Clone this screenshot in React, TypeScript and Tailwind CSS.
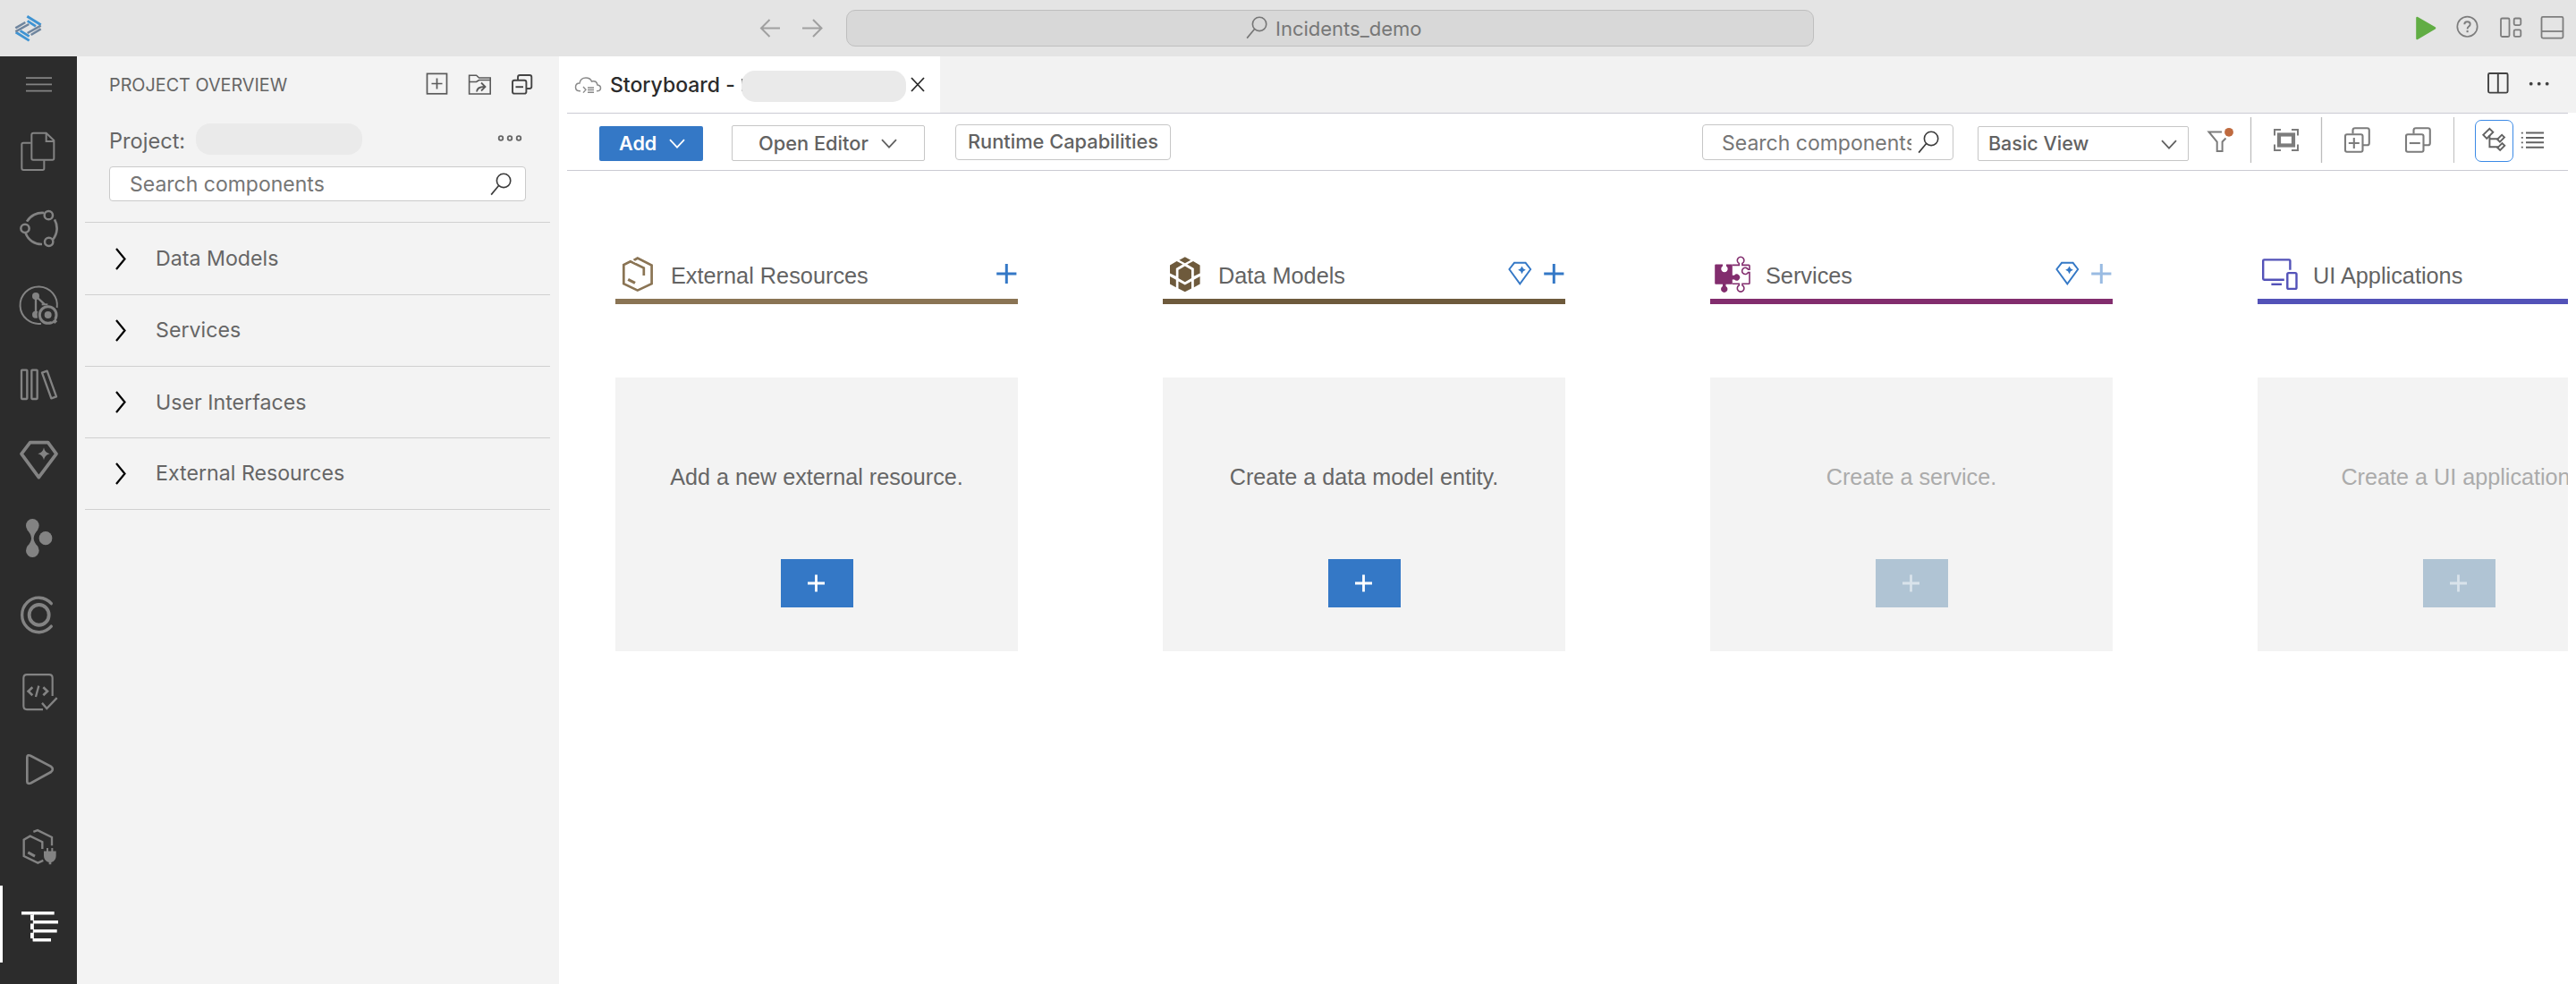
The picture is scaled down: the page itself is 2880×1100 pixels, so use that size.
import React from "react";

type IconProps = {
  box: string;
  className: string;
  stretch?: boolean;
  children: React.ReactNode;
};

function Icon({ box, className, stretch, children }: IconProps) {
  return (
    <svg
      viewBox={box}
      className={`block shrink-0 ${className}`}
      fill="none"
      stroke="currentColor"
      preserveAspectRatio={stretch ? "none" : "xMidYMid meet"}
    >
      {children}
    </svg>
  );
}

function SearchGlyph({ className }: { className: string }) {
  return (
    <Icon box="0 0 25 27" className={className}>
      <circle cx="15.7" cy="9.3" r="8" strokeWidth="1.7" />
      <path d="M10 15 L1.2 25.6" strokeWidth="1.7" />
    </Icon>
  );
}

function Chevron({ className }: { className: string }) {
  return (
    <Icon box="0 0 18 11" className={className}>
      <path d="M1 1.2 L9 9.6 L17 1.2" strokeWidth="1.8" />
    </Icon>
  );
}

function TopBar() {
  return (
    <header className="flex h-[63px] w-full shrink-0 bg-[#e4e4e4]">
      <Icon box="0 0 180 189" className="h-[63px] w-[60px]">
        <g stroke="#3f93d2" strokeWidth="8.5">
          <path d="M91 55 L137 83" />
          <path d="M92 70 L120 88" />
          <path d="M53 108 L98 136" />
          <path d="M68 103 L98 122" />
        </g>
        <g stroke="#6f859e" strokeWidth="7.5">
          <path d="M85 75 L52 94" />
          <path d="M97 81 L52 106" />
          <path d="M137 86 L92 111" />
          <path d="M137 97 L104 117" />
        </g>
      </Icon>
      <Icon box="840 0 90 63" className="ml-[780px] h-[63px] w-[90px] text-[#a0a0a0]">
        <path d="M860.5 22 L851 31.5 L860.5 41 M851 31.5 H872" strokeWidth="2" />
        <path d="M909 22 L918.5 31.5 L909 41 M918.5 31.5 H897" strokeWidth="2" />
      </Icon>
      <div className="ml-4 mt-[11px] flex h-[41px] w-[1082px] items-center rounded-[10px] border border-[#bfbfbf] bg-[#d8d8d8] pl-[446px] text-[#777777]">
        <SearchGlyph className="-mt-0.5 h-[26px] w-6" />
        <span className="ml-[9px] text-[22px] leading-none">Incidents_demo</span>
      </div>
      <Icon box="2690 0 190 63" className="ml-auto h-[63px] w-[190px] text-[#7d7d7d]">
        <path
          d="M2702.5 20 L2722 31.3 L2702.5 43 Z"
          fill="#61ad44"
          stroke="#61ad44"
          strokeWidth="2.6"
          strokeLinejoin="round"
        />
        <circle cx="2758.5" cy="29.8" r="11.2" strokeWidth="1.7" />
        <path
          d="M2755.3 27.2 Q2755.3 24.3 2758.5 24.3 Q2761.7 24.3 2761.7 27 Q2761.7 28.8 2759.9 29.8 Q2758.6 30.6 2758.6 32.4"
          strokeWidth="1.9"
        />
        <path d="M2758.6 34 V36.2" strokeWidth="2.1" />
        <rect x="2796" y="20.5" width="9.5" height="20.5" rx="1.5" strokeWidth="1.8" />
        <rect x="2810.7" y="20.5" width="7.6" height="7.6" rx="1.5" strokeWidth="1.8" />
        <rect x="2810.7" y="33.3" width="7.6" height="7.6" rx="1.5" strokeWidth="1.8" />
        <rect x="2841.5" y="18.8" width="24" height="23.8" rx="1.5" strokeWidth="1.8" />
        <path d="M2841.5 35 H2865.5" strokeWidth="1.8" />
      </Icon>
    </header>
  );
}

function ActivityBar() {
  return (
    <nav className="flex w-[86px] shrink-0 flex-col bg-[#2c2c2c] text-[#838383]">
      <Icon box="0 63 86 67" className="h-[67px] w-[86px]">
        <path d="M29 87.2 H58 M29 94.4 H58 M29 101.7 H58" strokeWidth="1.8" />
      </Icon>
      <Icon box="0 210 258 258" className="h-[86px] w-[86px]">
        <path
          d="M104 299 H78 Q73 299 73 304 V384 Q73 390 79 390 H143 Q148 390 148 385 V358"
          strokeWidth="6"
        />
        <path
          d="M112 266 H155 L181 291 V351 Q181 356 176 356 H111 Q106 356 106 351 V272 Q106 266 112 266 Z"
          strokeWidth="6"
        />
        <path d="M155 266 V294 H181" strokeWidth="6" />
      </Icon>
      <Icon box="0 468 258 258" className="h-[86px] w-[86px]">
        <circle cx="84" cy="586" r="14" strokeWidth="7.5" />
        <circle cx="163" cy="542" r="14" strokeWidth="7.5" />
        <circle cx="164" cy="631" r="14" strokeWidth="7.5" />
        <path d="M90 563 A60 60 0 0 1 148 534" strokeWidth="8" />
        <path d="M183 556 A60 60 0 0 1 177 624" strokeWidth="8" />
        <path d="M86 602 A56 56 0 0 0 141 639" strokeWidth="8" />
      </Icon>
      <Icon box="0 726 258 258" className="h-[86px] w-[86px]">
        <path d="M191 852 A62 62 0 1 0 138 905" strokeWidth="6" />
        <circle cx="120" cy="813" r="12" fill="currentColor" stroke="none" />
        <circle cx="120" cy="875" r="12" fill="currentColor" stroke="none" />
        <path d="M120 813 V875 M120 813 L150 841" strokeWidth="7" />
        <circle cx="161" cy="876" r="36" fill="#2c2c2c" stroke="none" />
        <path d="M140 841 H160" strokeWidth="6" />
        <circle cx="161" cy="876" r="28" strokeWidth="9" />
        <circle cx="161" cy="876" r="12" fill="currentColor" stroke="none" />
        <path d="M178 891 L188 902" strokeWidth="12" />
        <path d="M172 898 L182 889" stroke="#2c2c2c" strokeWidth="4" />
      </Icon>
      <Icon box="0 984 258 258" className="h-[86px] w-[86px]">
        <rect x="72" y="1061" width="19" height="97" rx="2" strokeWidth="7" />
        <rect x="106" y="1061" width="19" height="97" rx="2" strokeWidth="7" />
        <path
          d="M141 1070 L158 1064 L189 1150 L172 1156 Z"
          strokeWidth="7"
          strokeLinejoin="round"
        />
      </Icon>
      <Icon box="0 1242 258 258" className="h-[86px] w-[86px]">
        <path d="M101 1304 H161 L189 1342 L130 1421 L72 1342 Z" strokeWidth="11" strokeLinejoin="round" />
        <path
          d="M147 1321 Q150 1338 167 1342 Q150 1346 147 1363 Q144 1346 127 1342 Q144 1338 147 1321 Z"
          fill="currentColor"
          stroke="none"
        />
      </Icon>
      <Icon box="0 0 258 249.7" stretch className="h-[86px] w-[86px]">
        <g fill="currentColor" stroke="none">
          <circle cx="109" cy="80" r="22" />
          <circle cx="109" cy="161" r="22" />
          <circle cx="153" cy="121" r="22" />
          <path d="M90 92 Q105 108 105 121 Q105 134 90 149 H128 Q113 134 113 121 Q113 108 128 92 Z" />
        </g>
      </Icon>
      <Icon box="0 249.7 258 249.7" stretch className="h-[86px] w-[86px]">
        <circle cx="131" cy="370" r="33" strokeWidth="11.5" />
        <path d="M172 333 A56 56 0 1 0 172 407" strokeWidth="10" strokeLinecap="round" />
      </Icon>
      <Icon box="0 499.5 258 249.7" stretch className="h-[86px] w-[86px]">
        <path
          d="M144 677 H90 Q79 677 79 666 V575 Q79 564 90 564 H165 Q176 564 176 575 V633"
          strokeWidth="6.5"
        />
        <path d="M141 656 L157 674 L191 639" strokeWidth="7" />
        <path d="M109 605 L95 618 L109 631 M145 605 L159 618 L145 631" strokeWidth="8" />
        <path d="M130 600 L120 636" strokeWidth="7" />
      </Icon>
      <Icon box="0 749.2 258 249.7" stretch className="h-[86px] w-[86px]">
        <path
          d="M91 833 Q91 822 102 827 L171 862 Q182 871 171 880 L103 916 Q91 920 91 910 Z"
          strokeWidth="8"
        />
      </Icon>
      <Icon box="0 999 258 249.7" stretch className="h-[86px] w-[86px]">
        <path d="M112 1074 L126 1069 L174 1092 V1119" strokeWidth="7" />
        <path d="M145 1167 L127 1175 L80 1153 V1100 L101 1088 L142 1107 V1130" strokeWidth="7" />
        <path d="M94 1141 L117 1153" strokeWidth="9" />
        <path
          d="M147 1137 H188 V1152 Q188 1168 172 1173 V1180 H164 V1173 Q147 1168 147 1152 Z"
          fill="currentColor"
          stroke="none"
        />
        <path d="M159 1127 V1140 M175 1127 V1140" strokeWidth="6" />
      </Icon>
      <div className="h-[86px] w-[86px] text-white">
        <Icon box="0 1248.7 258 249.7" stretch className="h-[86px] w-[86px]">
          <rect x="0" y="1248.7" width="9" height="249.7" fill="currentColor" stroke="none" />
          <path d="M72 1338 H182 M112 1367 H195 M112 1396 H191 M110 1425 H171" strokeWidth="10" />
          <path d="M107 1343 V1361 M107 1372 V1391 M107 1402 V1420" strokeWidth="10" />
          <path d="M112 1340 V1428" strokeWidth="3" />
        </Icon>
      </div>
    </nav>
  );
}

const treeSections = ["Data Models", "Services", "User Interfaces", "External Resources"];

function ProjectPanel() {
  return (
    <aside className="flex w-[539px] shrink-0 flex-col bg-[#f3f3f3] text-[#666666]">
      <div className="flex h-16 items-center pl-9 pr-[25px]">
        <h2 className="mt-0.5 text-[19.8px] leading-none">PROJECT OVERVIEW</h2>
        <Icon box="470 63 130 64" className="ml-auto h-16 w-[130px] text-[#5a5a5a]">
          <rect x="477.5" y="82.4" width="22" height="22.4" strokeWidth="1.7" />
          <path d="M488.5 87.5 V99.5 M482.5 93.5 H494.5" strokeWidth="1.7" />
          <path
            d="M524.6 105 V84.2 H532.6 L535.6 87 H548.2 V105 Z M524.6 91.5 H532.6 L535.6 89.5 H548.2"
            strokeWidth="1.6"
          />
          <path d="M533 102.5 Q533.5 96.8 542 97" strokeWidth="1.8" />
          <path d="M538 92.5 L542.5 97 L538 101.5" strokeWidth="1.8" />
          <g className="text-[#444444]" stroke="currentColor" strokeWidth="1.9">
            <rect x="573" y="89.8" width="15.4" height="14.8" rx="2.2" />
            <path d="M579 89 V86.3 Q579 84 581.3 84 H592 Q594.3 84 594.3 86.3 V96.8 Q594.3 99 592 99 H589" />
            <path d="M576.5 97.2 H585" />
          </g>
        </Icon>
      </div>
      <div className="flex h-[59px] items-center pl-9 pr-[41px]">
        <span className="mt-[3px] w-[97px] text-[23.6px] leading-none">Project:</span>
        <span className="-mt-[3px] h-[35px] w-[186px] rounded-[16px] bg-[#eaeaea]" />
        <Icon box="556 145 28 20" className="-mt-1 ml-auto h-5 w-7">
          <circle cx="560" cy="154.5" r="2.3" strokeWidth="1.8" />
          <circle cx="570" cy="154.5" r="2.3" strokeWidth="1.8" />
          <circle cx="580" cy="154.5" r="2.3" strokeWidth="1.8" />
        </Icon>
      </div>
      <div className="ml-9 flex h-[39px] w-[466px] items-center rounded-[4px] border border-[#cacaca] bg-white pl-[22px] pr-[15px]">
        <span className="mt-0.5 text-[23px] leading-none text-[#767676]">Search components</span>
        <SearchGlyph className="ml-auto h-[26px] w-6 text-[#3c3c3c]" />
      </div>
      <div className="mt-[23.4px] pl-[9px] pr-[10px]">
        {treeSections.map((name) => (
          <div
            key={name}
            className="flex h-[80.3px] items-center border-t border-[#d0d0d0] pl-[34px] last:border-b"
          >
            <Icon box="0 0 12 25" className="h-[25px] w-3 text-black">
              <path d="M1 1 L10.5 12.5 L1 24" strokeWidth="2.2" />
            </Icon>
            <span className="ml-[33px] mt-px text-[23.2px] leading-none">{name}</span>
          </div>
        ))}
      </div>
    </aside>
  );
}

function TabStrip() {
  return (
    <div className="flex h-[63px] shrink-0 bg-[#f2f2f2]">
      <div className="flex w-[426px] items-center bg-white pl-[17px]">
        <Icon box="642 83 31 22" className="h-[22px] w-[31px] text-[#8a8a8a]">
          <path
            d="M649 100.8 Q643.5 101 643.5 96.5 Q643.5 92 648 92 Q649 86 655 86 Q660 86 661.5 90 Q667 88.5 668 94 Q671.5 94.5 671.5 97.5 Q671.5 100.8 667 100.8"
            strokeWidth="1.5"
          />
          <path d="M652 96 L655 99.3 L652 102.6 M657 97 H664 M657 99.5 H664 M657 102.2 H664" strokeWidth="1.4" />
        </Icon>
        <span className="ml-[9px] mt-px whitespace-nowrap text-[23px] font-medium leading-none text-[#2b2b2b]">
          Storyboard -
        </span>
        <span className="ml-[7px] h-[14px] w-[2px] bg-[#5a5a5a]" />
        <span className="-ml-[2px] mt-[3px] h-[35px] w-[184px] rounded-[15px] bg-[#eaeaea]" />
        <Icon box="0 0 16 17" className="ml-[5px] h-[17px] w-4 text-[#2b2b2b]">
          <path d="M1 1 L15 16 M15 1 L1 16" strokeWidth="1.8" />
        </Icon>
      </div>
      <Icon box="2770 63 110 63" className="ml-auto h-[63px] w-[110px] text-[#424242]">
        <rect x="2782" y="82" width="21.6" height="21.6" rx="1.5" strokeWidth="1.9" />
        <path d="M2792.8 82 V103.6" strokeWidth="1.9" />
        <g fill="currentColor" stroke="none">
          <circle cx="2829.7" cy="93.7" r="1.9" />
          <circle cx="2838.7" cy="93.7" r="1.9" />
          <circle cx="2847.7" cy="93.7" r="1.9" />
        </g>
      </Icon>
    </div>
  );
}

function Toolbar() {
  return (
    <div className="mx-[9px] flex h-[65px] shrink-0 items-start border-y border-[#cbcbd3] text-[22px] leading-none text-[#626262]">
      <button className="ml-9 mt-[14px] flex h-[39px] w-[116px] items-center rounded-[2px] bg-[#3478c6] pl-[22px] text-[21.6px] font-semibold leading-none text-white">
        Add
        <Chevron className="ml-[14px] h-[11px] w-[18px]" />
      </button>
      <button className="ml-8 mt-[13px] flex h-[40px] w-[216px] items-center rounded-[2px] border border-[#c6c6c6] pl-[29px] pt-px text-[21.8px] font-medium leading-none">
        Open Editor
        <Chevron className="ml-[14px] h-[11px] w-[18px]" />
      </button>
      <button className="ml-[34px] mt-3 flex h-10 w-[241px] items-center justify-center rounded-[4px] border border-[#c6c6c6] pb-px text-[21.8px] font-medium leading-none">
        Runtime Capabilities
      </button>
      <div className="ml-auto mt-3 flex h-10 w-[281px] items-center rounded-[4px] border border-[#c6c6c6] pl-[21px]">
        <span className="mt-0.5 w-[212px] overflow-hidden whitespace-nowrap py-1 text-[23px] leading-[28px] text-[#767676]">
          Search components
        </span>
        <SearchGlyph className="ml-[7px] h-[26px] w-6 text-[#3c3c3c]" />
      </div>
      <div className="ml-[27px] mt-[14px] flex h-[39px] w-[236px] items-center justify-between rounded-[2px] border border-[#c6c6c6] pl-[11px] pr-3 pt-px text-[21.5px] font-medium leading-none">
        Basic View
        <Chevron className="h-[11px] w-[18px]" />
      </div>
      <Icon box="2447 127 296 63" className="h-[63px] w-[296px] text-[#7c7c7c]">
        <path
          d="M2484 147.4 H2469.5 L2478.7 158.5 V169 H2484.6 V158.5 L2488.5 154.5"
          strokeWidth="2"
        />
        <circle cx="2492" cy="147.8" r="4.9" fill="#bf6a3f" stroke="none" />
        <path d="M2516.5 131 V182 M2595.5 131 V182" stroke="#bdbdbd" strokeWidth="1.3" />
        <path
          d="M2543 151.5 V145 H2550 M2562 145 H2569 V151.5 M2569 161.5 V168 H2562 M2550 168 H2543 V161.5"
          strokeWidth="2"
        />
        <rect x="2548" y="150.5" width="16" height="12" strokeWidth="4.2" />
        <g strokeWidth="2.1">
          <rect x="2622" y="150.3" width="19.5" height="19.5" rx="2" />
          <path d="M2630.5 149.5 V145.5 Q2630.5 143.2 2633 143.2 H2646.5 Q2648.8 143.2 2648.8 145.5 V160 Q2648.8 162.3 2646.5 162.3 H2642" />
          <path d="M2631.8 154 V166 M2625.8 160 H2637.8" />
          <rect x="2690" y="150.3" width="19.5" height="19.5" rx="2" />
          <path d="M2698.5 149.5 V145.5 Q2698.5 143.2 2701 143.2 H2714.5 Q2716.8 143.2 2716.8 145.5 V160 Q2716.8 162.3 2714.5 162.3 H2710" />
          <path d="M2693.8 160 H2705.8" />
        </g>
      </Icon>
      <div className="mt-1 h-[51px] w-px bg-[#bdbdbd]" />
      <button className="ml-[23px] mt-[7px] rounded-[7px] border border-[#3b8ae6]">
        <Icon box="2768 135 41 45" className="h-[45px] w-[41px] text-[#626262]">
          <g strokeWidth="1.9">
            <rect x="-5" y="-2.8" width="10" height="5.6" transform="translate(2781.8 149.3) rotate(-45)" />
            <rect x="-3.6" y="-2" width="7.2" height="4" transform="translate(2796 154.7) rotate(-45)" />
            <rect x="-3.6" y="-2" width="7.2" height="4" transform="translate(2796.3 164) rotate(-45)" />
            <path d="M2783.4 151 V164.2 H2793.5 M2783.4 155.3 H2793.5" />
          </g>
        </Icon>
      </button>
      <Icon box="2810 127 61 63" className="h-[63px] w-[61px] text-[#626262]">
        <path
          d="M2824 148.6 H2844 M2824 153.9 H2844 M2824 159.3 H2844 M2824 164.7 H2844"
          strokeWidth="2"
        />
        <path
          d="M2818.8 148.6 H2820.8 M2818.8 153.9 H2820.8 M2818.8 159.3 H2820.8 M2818.8 164.7 H2820.8"
          strokeWidth="1.8"
        />
      </Icon>
    </div>
  );
}

function ExternalResourcesIcon() {
  return (
    <Icon box="0 0 61 52" className="h-[52px] w-[61px] text-[#8a7454]">
      <path
        d="M20.6 9 L24.8 6.6 L40.6 14.5 V35.2 L24.8 42.6 L9.3 35.2 V14 L16.8 10.2 L31.8 17.6 V26"
        strokeWidth="2.7"
      />
      <path d="M20.2 9.6 L23.6 11.4" stroke="white" strokeWidth="1.6" />
      <path d="M14.2 30.3 L22 34.4" strokeWidth="3.2" />
    </Icon>
  );
}

function DataModelsIcon() {
  return (
    <Icon box="0 0 61 52" className="h-[52px] w-[61px] text-[#6e5a3c]">
      <g fill="currentColor" stroke="none">
        <path d="M24.8 5.2 L31.2 8.7 L24.8 12.2 L18.4 8.7 Z" />
        <path d="M15.6 10 L22.3 13.6 L14.8 18 V26.7 L8 23.6 V14.4 Z" />
        <path d="M34 10 L27.3 13.6 L34.8 18 V26.7 L41.6 23.6 V14.4 Z" />
        <path d="M24.8 15.4 L32 19.7 V29 L24.8 33.2 L17.5 29 V19.7 Z" />
        <path d="M8 27 L14.8 30.8 V39.2 L8 35.4 Z" />
        <path d="M41.6 27 L34.8 30.8 V39.2 L41.6 35.4 Z" />
        <path d="M17.5 32.4 L24.8 36.4 L32 32.4 V40.4 L24.8 44.2 L17.5 40.4 Z" />
      </g>
    </Icon>
  );
}

function ServicesIcon() {
  return (
    <Icon box="0 0 61 52" className="h-[52px] w-[61px] text-[#822d6e]">
      <g fill="currentColor" stroke="none">
        <path d="M6.3 13.5 H14 V15.4 A3.7 3.7 0 1 0 17.9 15.4 V13.5 H24.8 V25.8 H27 A3.5 3.5 0 1 1 27 30.4 H24.8 V35.8 H17.5 V38 A3.7 3.7 0 1 1 14 38 V35.8 H6.3 Q5.2 35.8 5.2 34.7 V14.6 Q5.2 13.5 6.3 13.5 Z" />
      </g>
      <path
        d="M25 14.4 H32.3 V12.4 A3.8 3.8 0 1 1 35.9 12.4 V14.4 H43.2 Q44 14.4 44 15.2 V19.2 H42.4 A3.6 3.6 0 1 0 42.4 22.6 H44 V34.4 Q44 35.2 43.2 35.2 H36 V37 A3.8 3.8 0 1 1 32.2 37 V35.2 H25"
        strokeWidth="1.6"
      />
    </Icon>
  );
}

function UiApplicationsIcon() {
  return (
    <Icon box="0 0 61 52" className="h-[52px] w-[61px] text-[#5352b8]">
      <path
        d="M29.8 30.8 H7.4 Q6.2 30.8 6.2 29.6 V9.6 Q6.2 8.4 7.4 8.4 H35.2 Q36.4 8.4 36.4 9.6 V19.7"
        strokeWidth="2.4"
      />
      <path d="M15.4 35.8 H27" strokeWidth="2.4" />
      <rect x="33.3" y="23.1" width="10.2" height="17.8" rx="1.5" strokeWidth="2.4" />
    </Icon>
  );
}

type Column = {
  title: string;
  message: string;
  icon: React.ReactNode;
  bar: string;
  gem: boolean;
  enabled: boolean;
};

const columns: Column[] = [
  {
    title: "External Resources",
    message: "Add a new external resource.",
    icon: <ExternalResourcesIcon />,
    bar: "bg-[#8a7454]",
    gem: false,
    enabled: true,
  },
  {
    title: "Data Models",
    message: "Create a data model entity.",
    icon: <DataModelsIcon />,
    bar: "bg-[#6e5a3c]",
    gem: true,
    enabled: true,
  },
  {
    title: "Services",
    message: "Create a service.",
    icon: <ServicesIcon />,
    bar: "bg-[#822d6e]",
    gem: true,
    enabled: false,
  },
  {
    title: "UI Applications",
    message: "Create a UI application.",
    icon: <UiApplicationsIcon />,
    bar: "bg-[#5352b8]",
    gem: true,
    enabled: false,
  },
];

function StoryColumn({ column }: { column: Column }) {
  const { title, message, icon, bar, gem, enabled } = column;
  return (
    <section className="w-[450px] shrink-0">
      <div className="flex h-[52px] items-center">
        {icon}
        <h3 className="ml-px mt-0.5 text-[25.3px] leading-none text-[#636363]">{title}</h3>
        <Icon box="380 0 70 52" className="ml-auto h-[52px] w-[70px] text-[#3478c6]">
          {gem && (
            <>
              <path d="M393 11.8 H405.6 L411.2 19 L399.3 35.4 L387.4 19 Z" strokeWidth="1.9" />
              <path
                d="M401.5 15.4 L403 18.2 L405.8 19.7 L403 21.2 L401.5 24.2 L400 21.2 L397.2 19.7 L400 18.2 Z"
                fill="currentColor"
                stroke="none"
              />
            </>
          )}
          <path
            d="M437.3 13 V35 M426.2 23.9 H448.4"
            strokeWidth="3"
            opacity={enabled ? 1 : 0.5}
          />
        </Icon>
      </div>
      <div className={`h-1.5 ${bar}`} />
      <div className="mt-[82px] flex h-[306px] flex-col items-center bg-[#f3f3f3] pt-24">
        <p
          className={`h-[30px] text-[25.2px] leading-[30px] ${enabled ? "text-[#666666]" : "text-[#ababab]"}`}
        >
          {message}
        </p>
        <button
          className={`mt-[77px] flex h-[54px] w-[81px] items-center justify-center ${
            enabled ? "bg-[#3478c6] text-white" : "bg-[#b0c4d4] text-[#d9e3eb]"
          }`}
        >
          <Icon box="0 0 20 20" className="h-5 w-5">
            <path d="M9.5 0.5 V19.5 M0 10 H19" strokeWidth="2.8" />
          </Icon>
        </button>
      </div>
    </section>
  );
}

function Storyboard() {
  return (
    <main className="flex min-w-0 flex-1 flex-col bg-white">
      <TabStrip />
      <Toolbar />
      <div className="mx-[9px] flex flex-1 gap-[162px] overflow-hidden whitespace-nowrap pl-[54px] pt-[91px] font-['Liberation_Sans',Arial,sans-serif]">
        {columns.map((column) => (
          <StoryColumn key={column.title} column={column} />
        ))}
      </div>
    </main>
  );
}

export default function App() {
  return (
    <div className="flex h-[1100px] w-[2880px] flex-col overflow-hidden bg-white font-['Inter',sans-serif]">
      <TopBar />
      <div className="flex min-h-0 flex-1">
        <ActivityBar />
        <ProjectPanel />
        <Storyboard />
      </div>
    </div>
  );
}
